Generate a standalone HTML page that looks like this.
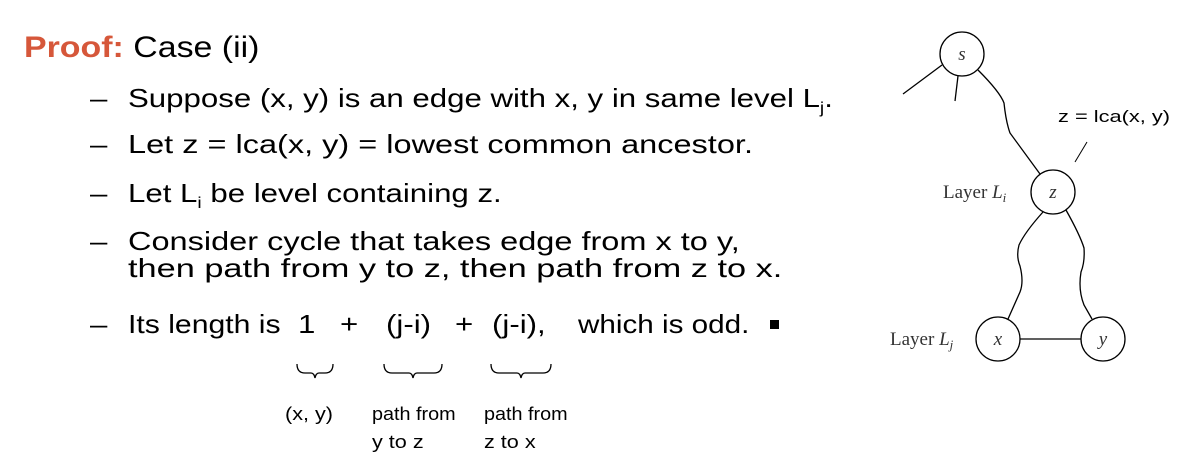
<!DOCTYPE html>
<html><head><meta charset="utf-8"><style>
body{margin:0;width:1182px;height:468px;background:#fff;position:relative;overflow:hidden;font-family:"Liberation Sans",sans-serif;color:#000}
.t{position:absolute;white-space:nowrap;font-size:26px;line-height:26px;transform:scaleX(1.2);transform-origin:0 0}
.s{font-size:18px;position:absolute;white-space:nowrap;line-height:18px;transform:scaleX(1.2);transform-origin:0 0}
sub{font-size:16px;vertical-align:-6px;line-height:0}
</style></head><body>
<div class="t" style="left:24px;top:33px;font-size:30px;line-height:30px;transform:scaleX(1.13)"><b style="color:#D6573A">Proof:</b> Case (ii)</div>
<div class="t" style="left:90px;top:85px">–</div>
<div class="t" style="left:128px;top:85px">Suppose (x, y) is an edge with x, y in same level L<sub>j</sub>.</div>
<div class="t" style="left:90px;top:131px">–</div>
<div class="t" style="left:128px;top:131px;transform:scaleX(1.25)">Let z = lca(x, y) = lowest common ancestor.</div>
<div class="t" style="left:90px;top:180px">–</div>
<div class="t" style="left:128px;top:180px">Let L<sub>i</sub> be level containing z.</div>
<div class="t" style="left:90px;top:228px">–</div>
<div class="t" style="left:128px;top:228px;transform:scaleX(1.25)">Consider cycle that takes edge from x to y,</div>
<div class="t" style="left:128px;top:255px;transform:scaleX(1.32)">then path from y to z, then path from z to x.</div>
<div class="t" style="left:90px;top:311px">–</div>
<div class="t" style="left:128px;top:311px;transform:scaleX(1.16)">Its length is</div>
<div class="t" style="left:298px;top:311px">1</div>
<div class="t" style="left:340px;top:311px">+</div>
<div class="t" style="left:386px;top:311px">(j-i)</div>
<div class="t" style="left:455px;top:311px">+</div>
<div class="t" style="left:492px;top:311px">(j-i),</div>
<div class="t" style="left:578px;top:311px;transform:scaleX(1.14)">which is odd.</div>
<div style="position:absolute;left:770px;top:320px;width:9px;height:9px;background:#000"></div>
<svg width="1182" height="468" style="position:absolute;left:0;top:0" fill="none" stroke="#000" stroke-width="1.3">
<path d="M297 364 q0 9 8 9 h6 q3 0 4 5 q1-5 4-5 h6 q8 0 8-9"/>
<path d="M384 364 q0 9 8 9 h17 q3 0 4 5 q1-5 4-5 h17 q8 0 8-9"/>
<path d="M491 364 q0 9 8 9 h18 q3 0 4 5 q1-5 4-5 h18 q8 0 8-9"/>
<circle cx="962" cy="54" r="22"/>
<circle cx="1053" cy="192" r="22"/>
<circle cx="998" cy="339" r="22"/>
<circle cx="1103" cy="339" r="22"/>
<path d="M942 65 L903 94"/>
<path d="M958 76 L955 101"/>
<path d="M978 70 Q1000 92 1004 103 Q1006 122 1010 133 L1040 174"/>
<path d="M1043 212 Q1025 232 1019 245 Q1016 256 1020 266 Q1024 282 1020 292 L1008 319"/>
<path d="M1066 210 Q1080 235 1084 248 Q1085 262 1081 272 Q1078 290 1084 305 L1092 319"/>
<path d="M1020 339 H1081"/>
<path d="M1087 142 L1075 162" stroke-width="1"/>
<text x="962" y="60" font-family="Liberation Serif" font-style="italic" font-size="19" fill="#333" stroke="none" text-anchor="middle">s</text>
<text x="1053" y="198" font-family="Liberation Serif" font-style="italic" font-size="19" fill="#333" stroke="none" text-anchor="middle">z</text>
<text x="998" y="345" font-family="Liberation Serif" font-style="italic" font-size="19" fill="#333" stroke="none" text-anchor="middle">x</text>
<text x="1103" y="345" font-family="Liberation Serif" font-style="italic" font-size="19" fill="#333" stroke="none" text-anchor="middle">y</text>
<text x="943" y="198" font-family="Liberation Serif" font-size="19" fill="#333" stroke="none">Layer <tspan font-style="italic">L</tspan><tspan font-style="italic" font-size="13" dy="4">i</tspan></text>
<text x="890" y="345" font-family="Liberation Serif" font-size="19" fill="#333" stroke="none">Layer <tspan font-style="italic">L</tspan><tspan font-style="italic" font-size="13" dy="4">j</tspan></text>
<text x="1058" y="122" font-family="Liberation Sans" font-size="17" fill="#000" stroke="none" textLength="112" lengthAdjust="spacingAndGlyphs">z = lca(x, y)</text>
</svg>
<div class="s" style="left:285px;top:405px">(x, y)</div>
<div class="s" style="left:372px;top:405px;transform:scaleX(1.1)">path from</div>
<div class="s" style="left:372px;top:433px">y to z</div>
<div class="s" style="left:484px;top:405px;transform:scaleX(1.1)">path from</div>
<div class="s" style="left:484px;top:433px">z to x</div>
</body></html>
